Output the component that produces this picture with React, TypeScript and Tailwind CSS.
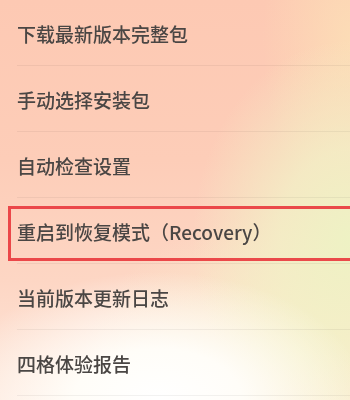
import React from "react";

const items = [
  "下载最新版本完整包",
  "手动选择安装包",
  "自动检查设置",
  "重启到恢复模式（Recovery）",
  "当前版本更新日志",
  "四格体验报告",
];

export default function App() {
  return (
    <div className="h-[400px] w-[350px] overflow-hidden bg-[image:radial-gradient(ellipse_60%_32%_at_45%_100%,#ffffff_0%,#fffdf8_40%,rgba(255,253,248,0)_100%),radial-gradient(ellipse_45%_50%_at_100%_60%,#eef2c4_0%,rgba(242,240,198,0.8)_45%,rgba(246,236,200,0)_100%),radial-gradient(ellipse_60%_35%_at_85%_88%,#f9f1cc_0%,rgba(249,241,204,0)_100%),radial-gradient(ellipse_25%_45%_at_100%_10%,rgba(252,222,182,0.9)_0%,rgba(252,222,182,0)_100%),linear-gradient(180deg,#fdc9b3_0%,#fdcdb8_40%,#fdd6c4_70%,#fee7db_100%)] font-['Noto_Sans_CJK_SC',sans-serif]">
      {items.map((label, i) => (
        <div key={label} className="relative h-[66px] pl-[17px]">
          <div className="flex h-full items-center border-b border-black/[0.05] pt-[1px] text-[19px] font-medium leading-none text-[#4a4644] blur-[0.3px]">
            {label}
          </div>
          {i === 3 && (
            <div className="absolute top-[8px] -right-2 bottom-[3px] left-[8px] border-[3px] border-[#e9373c]/90" />
          )}
        </div>
      ))}
    </div>
  );
}
